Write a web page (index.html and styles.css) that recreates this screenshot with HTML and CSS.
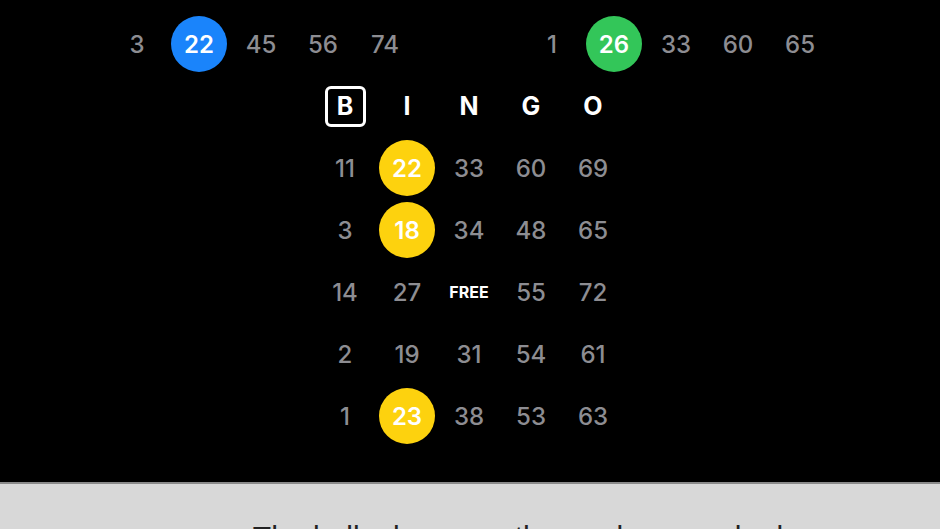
FILE: index.html
```html
<!DOCTYPE html>
<html>
<head>
<meta charset="utf-8">
<link rel="stylesheet" href="styles.css">
</head>
<body>
<main class="board">
  <div class="called">
    <div class="group">
      <span class="cell">3</span>
      <span class="cell"><span class="ball blue">22</span></span>
      <span class="cell">45</span>
      <span class="cell">56</span>
      <span class="cell">74</span>
    </div>
    <div class="group">
      <span class="cell">1</span>
      <span class="cell"><span class="ball green">26</span></span>
      <span class="cell">33</span>
      <span class="cell">60</span>
      <span class="cell">65</span>
    </div>
  </div>
  <div class="card">
    <span class="cell head"><span class="boxed">B</span></span>
    <span class="cell head">I</span>
    <span class="cell head">N</span>
    <span class="cell head">G</span>
    <span class="cell head">O</span>

    <span class="cell">11</span>
    <span class="cell"><span class="ball yellow">22</span></span>
    <span class="cell">33</span>
    <span class="cell">60</span>
    <span class="cell">69</span>

    <span class="cell">3</span>
    <span class="cell"><span class="ball yellow">18</span></span>
    <span class="cell">34</span>
    <span class="cell">48</span>
    <span class="cell">65</span>

    <span class="cell">14</span>
    <span class="cell">27</span>
    <span class="cell free">FREE</span>
    <span class="cell">55</span>
    <span class="cell">72</span>

    <span class="cell">2</span>
    <span class="cell">19</span>
    <span class="cell">31</span>
    <span class="cell">54</span>
    <span class="cell">61</span>

    <span class="cell">1</span>
    <span class="cell"><span class="ball yellow">23</span></span>
    <span class="cell">38</span>
    <span class="cell">53</span>
    <span class="cell">63</span>
  </div>
</main>
<footer class="caption">
  <p>The balls drawn on the card are marked</p>
</footer>
</body>
</html>
```

FILE: styles.css
```css
html, body {
  margin: 0;
  padding: 0;
}
body {
  width: 940px;
  height: 529px;
  overflow: hidden;
  background: #000;
  font-family: Inter, "Noto Sans", sans-serif;
}
.board {
  height: 482px;
  box-sizing: border-box;
  padding-top: 13px;
  background: #000;
  display: flex;
  flex-direction: column;
  align-items: center;
}
.called {
  display: flex;
  gap: 105px;
  margin-left: -3px;
}
.group {
  display: flex;
}
.cell {
  width: 62px;
  height: 62px;
  display: flex;
  align-items: center;
  justify-content: center;
  color: #8d8d92;
  font-size: 24px;
  font-weight: 500;
}
.card {
  display: grid;
  grid-template-columns: repeat(5, 62px);
  margin-left: -2px;
}
.ball {
  width: 56px;
  height: 56px;
  border-radius: 50%;
  display: flex;
  align-items: center;
  justify-content: center;
  color: #fff;
  font-weight: 600;
  font-size: 24px;
}
.blue { background: #1a84fb; }
.green { background: #33c659; }
.yellow { background: #fdd20e; }
.head {
  color: #fff;
  font-weight: 700;
  font-size: 25px;
}
.boxed {
  width: 35px;
  height: 35px;
  border: 3px solid #fff;
  border-radius: 6px;
  display: flex;
  align-items: center;
  justify-content: center;
}
.free {
  color: #fff;
  font-weight: 700;
  font-size: 16px;
}
.caption {
  height: 47px;
  border-top: 2px solid #8a8a8a;
  background: #d8d8d8;
  box-sizing: border-box;
  padding-top: 36px;
}
.caption p {
  margin: 0;
  text-align: center;
  font-family: "Liberation Sans", Arial, sans-serif;
  font-size: 30px;
  line-height: 34px;
  color: #222;
  padding-left: 96px;
}
```
